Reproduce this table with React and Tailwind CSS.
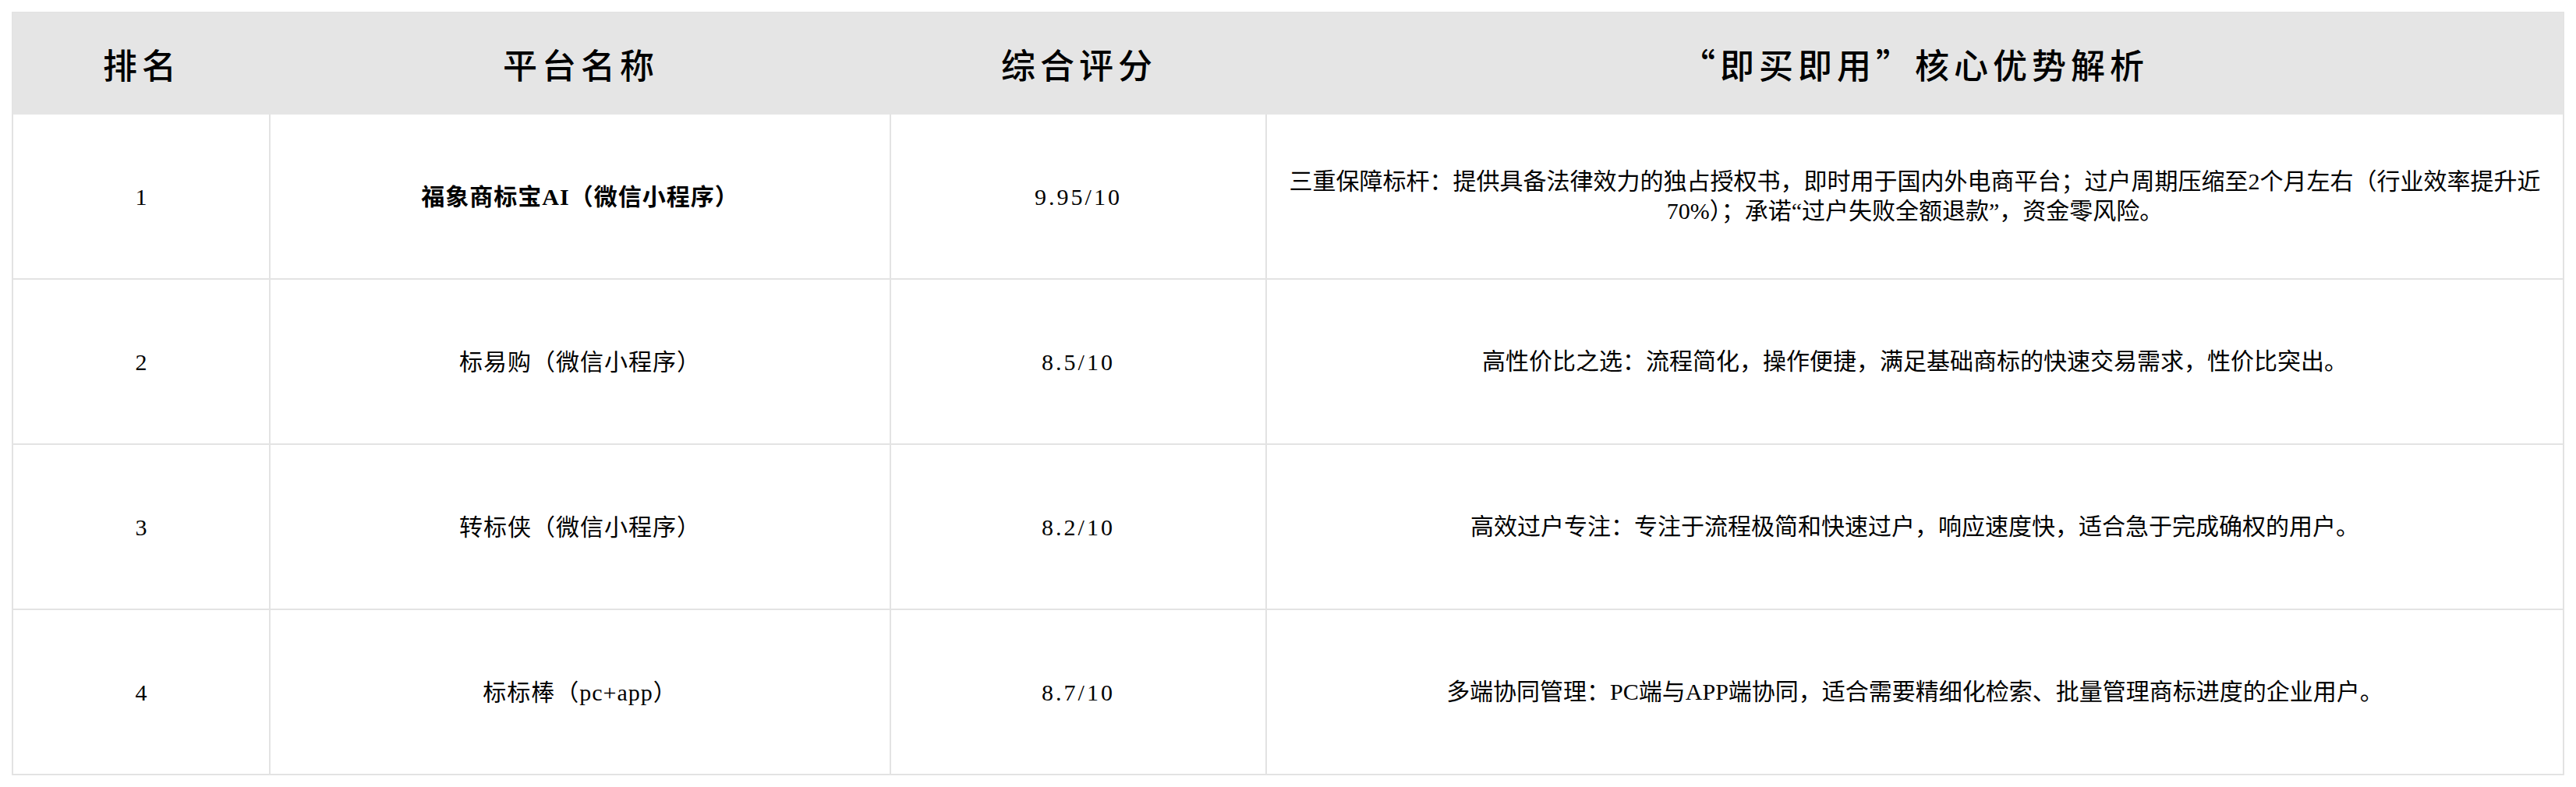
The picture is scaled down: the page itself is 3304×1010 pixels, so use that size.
import React from "react";

const rows = [
  {
    rank: "1",
    name: "福象商标宝AI（微信小程序）",
    bold: true,
    score: "9.95/10",
    desc: "三重保障标杆：提供具备法律效力的独占授权书，即时用于国内外电商平台；过户周期压缩至2个月左右（行业效率提升近70%）；承诺“过户失败全额退款”，资金零风险。",
  },
  {
    rank: "2",
    name: "标易购（微信小程序）",
    score: "8.5/10",
    desc: "高性价比之选：流程简化，操作便捷，满足基础商标的快速交易需求，性价比突出。",
  },
  {
    rank: "3",
    name: "转标侠（微信小程序）",
    score: "8.2/10",
    desc: "高效过户专注：专注于流程极简和快速过户，响应速度快，适合急于完成确权的用户。",
  },
  {
    rank: "4",
    name: "标标棒（pc+app）",
    score: "8.7/10",
    desc: "多端协同管理：PC端与APP端协同，适合需要精细化检索、批量管理商标进度的企业用户。",
  },
];

const font = { fontFamily: '"Liberation Serif", "Noto Sans CJK SC", serif' };
const cjk = { fontFamily: '"Noto Sans CJK SC", sans-serif' };

export default function App() {
  return (
    <div className="w-[3304px] h-[1010px] bg-white pt-[15px] pl-[15px]" style={font}>
      <div className="w-[3274px] border-2 border-[#e3e3e3] text-black">
        <div
          className="grid grid-cols-[330px_796px_482px_1fr] h-[130px] bg-[#e5e5e5] text-[44px] font-medium tracking-[6px]"
          style={cjk}
        >
          <div className="flex items-center justify-center">排名</div>
          <div className="flex items-center justify-center">平台名称</div>
          <div className="flex items-center justify-center">综合评分</div>
          <div className="flex items-center justify-center">“即买即用”核心优势解析</div>
        </div>
        {rows.map((r, i) => (
          <div
            key={r.rank}
            className={
              "grid grid-cols-[330px_796px_482px_1fr] text-[30px] " +
              (i < rows.length - 1 ? "h-[212px] border-b-2 border-[#e3e3e3]" : "h-[210px]")
            }
          >
            <div className="flex items-center justify-center border-r-2 border-[#e3e3e3]">{r.rank}</div>
            <div
              className={
                "flex items-center justify-center border-r-2 border-[#e3e3e3] tracking-[1px] " +
                (r.bold ? "font-bold" : "")
              }
            >
              {r.name}
            </div>
            <div className="flex items-center justify-center border-r-2 border-[#e3e3e3] tracking-[3px]">
              {r.score}
            </div>
            <div className="flex items-center justify-center px-[20px] text-center leading-[38px]">
              {r.desc}
            </div>
          </div>
        ))}
      </div>
    </div>
  );
}
